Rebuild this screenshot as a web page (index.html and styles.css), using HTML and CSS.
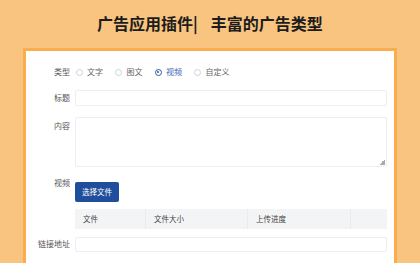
FILE: index.html
```html
<!DOCTYPE html>
<html lang="zh">
<head>
<meta charset="utf-8">
<link rel="stylesheet" href="styles.css">
</head>
<body>
<div class="page">
  <h1 class="title">广告应用插件|<span class="gap"></span>丰富的广告类型</h1>
  <div class="card">
    <div class="row row-type">
      <div class="label">类型</div>
      <div class="field radios">
        <span class="radio"><i class="dot"></i>文字</span>
        <span class="radio"><i class="dot"></i>图文</span>
        <span class="radio checked"><i class="dot"></i>视频</span>
        <span class="radio"><i class="dot"></i>自定义</span>
      </div>
    </div>
    <div class="row row-title">
      <div class="label">标题</div>
      <div class="field"><div class="input"></div></div>
    </div>
    <div class="row row-content">
      <div class="label">内容</div>
      <div class="field"><div class="textarea"><i class="grip"></i></div></div>
    </div>
    <div class="row row-video">
      <div class="label">视频</div>
      <div class="field"><span class="btn">选择文件</span></div>
    </div>
    <div class="row row-table">
      <div class="label"></div>
      <div class="field">
        <div class="thead">
          <div class="th c1">文件</div>
          <div class="th c2">文件大小</div>
          <div class="th c3">上传进度</div>
          <div class="th c4"></div>
        </div>
      </div>
    </div>
    <div class="row row-link">
      <div class="label">链接地址</div>
      <div class="field"><div class="input"></div></div>
    </div>
    <div class="row row-time">
      <div class="label">投放时间</div>
      <div class="field dates">
        <div class="input date"><span class="ph">开始日期</span></div>
        <div class="input date"><span class="ph">结束日期</span></div>
      </div>
    </div>
  </div>
</div>
</body>
</html>
```

FILE: styles.css
```css
* { box-sizing: border-box; }
html, body { margin: 0; padding: 0; }
body {
  width: 420px;
  height: 263px;
  overflow: hidden;
  background: #f8c47f;
  font-family: "Noto Sans CJK SC", "Noto Sans", sans-serif;
}
.page { display: flex; flex-direction: column; }
.title {
  margin: 0;
  height: 48px;
  padding-top: 12px;
  font-size: 16px;
  line-height: 22px;
  font-weight: 700;
  color: #1c1c1c;
  text-align: center;
}
.title .gap { display: inline-block; width: 13px; }
.card {
  margin: 0 23px;
  border: 3px solid #f9ad4d;
  border-bottom: none;
  background: #fff;
  padding: 13px 7px 20px 0;
  height: 230px;
}
.row {
  display: grid;
  grid-template-columns: 44px 1fr;
  column-gap: 5px;
  align-items: center;
}
.label {
  font-size: 8px;
  color: #555;
  text-align: right;
  white-space: nowrap;
  line-height: 10px;
}
.row-type { height: 16px; }
.row-title { margin-top: 10px; }
.row-content { margin-top: 11px; align-items: start; }
.row-content .label { margin-top: 4px; }
.row-video { margin-top: 9px; align-items: start; }
.row-video .label { margin-top: 2px; }
.row-table { margin-top: 7px; }
.row-link { margin-top: 8px; }
.row-time { margin-top: 11px; align-items: start; }
.row-time .label { margin-top: 1px; }

.radios { display: flex; align-items: center; padding-left: 0.5px; }
.radio {
  display: inline-flex;
  align-items: center;
  font-size: 8px;
  color: #666;
  margin-right: 12px;
  line-height: 10px;
}
.radio .dot {
  width: 7px;
  height: 7px;
  border-radius: 50%;
  border: 1px solid #cfd3d8;
  margin-right: 4.5px;
  position: relative;
  background: #fff;
}
.radio.checked { color: #3d65b0; }
.radio.checked .dot { border-color: #2f5aa8; }
.radio.checked .dot::after {
  content: "";
  position: absolute;
  left: 1.5px;
  top: 1.5px;
  width: 2px;
  height: 2px;
  border-radius: 50%;
  background: #2f5aa8;
}
.input {
  height: 16px;
  border: 1px solid #eceef1;
  border-radius: 2px;
  background: #fff;
}
.row-link .input { height: 15px; }
.textarea {
  height: 50px;
  border: 1px solid #eceef1;
  border-radius: 2px;
  position: relative;
}
.grip {
  position: absolute;
  right: 1px;
  bottom: 1px;
  width: 6px;
  height: 6px;
  background: linear-gradient(135deg, transparent 50%, #a9a9a9 50%);
}
.btn {
  display: inline-flex;
  align-items: center;
  justify-content: center;
  width: 44px;
  height: 20px;
  background: #1f4f9c;
  border-radius: 2px;
  color: #fff;
  font-size: 7.5px;
}
.thead {
  display: grid;
  grid-template-columns: 71px 102px 103px 1fr;
  height: 20px;
  background: #f3f4f6;
}
.th {
  font-size: 7.5px;
  color: #444;
  display: flex;
  align-items: center;
  padding-left: 8px;
  border-right: 1px solid #e9ebee;
}
.th.c4 { border-right: none; }
.dates { display: flex; gap: 13px; }
.input.date {
  width: 92px;
  height: 16px;
  padding-left: 6px;
  display: flex;
  align-items: center;
}
.ph { font-size: 7px; color: #aaa; }
```
